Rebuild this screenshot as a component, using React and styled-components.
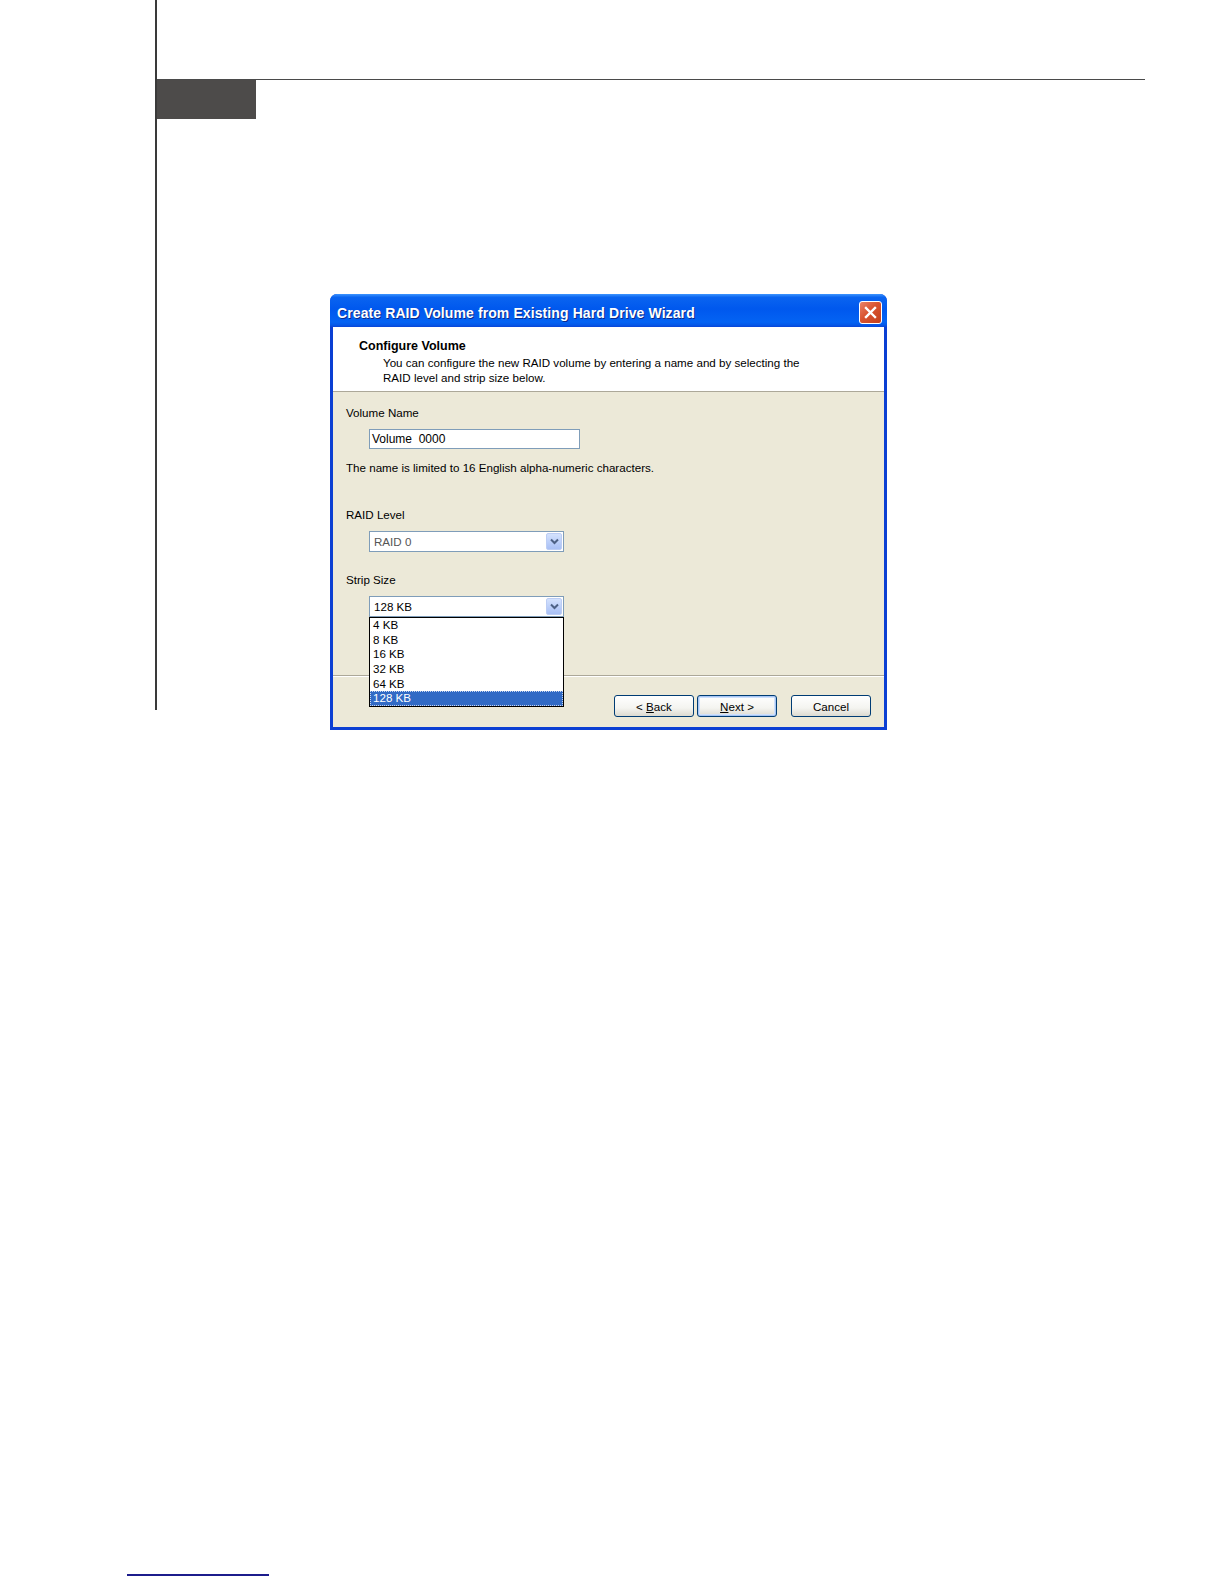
import React from "react";
import styled, { createGlobalStyle } from "styled-components";

const GlobalStyle = createGlobalStyle`
  html, body {
    margin: 0;
    padding: 0;
    background: #ffffff;
  }
  body {
    font-family: "Liberation Sans", Arial, sans-serif;
  }
`;

function Chevron() {
  return (
    <svg width="9" height="7" viewBox="0 0 9 7">
      <polyline points="1,1.5 4.5,5 8,1.5" fill="none" stroke="#4d6185" strokeWidth="2" />
    </svg>
  );
}

function CloseGlyph() {
  return (
    <svg width="13" height="13" viewBox="0 0 13 13">
      <path d="M2 2 L11 11 M11 2 L2 11" stroke="#ffffff" strokeWidth="2.4" strokeLinecap="square" />
    </svg>
  );
}

const sizes = ["4 KB", "8 KB", "16 KB", "32 KB", "64 KB", "128 KB"];

function App() {
  return (
    <Page>
      <GlobalStyle />
      <Sheet>
        <TopRule />
        <ChapterTab />
        <Dialog>
          <TitleBar>
            <TitleText>Create RAID Volume from Existing Hard Drive Wizard</TitleText>
            <CloseButton>
              <CloseGlyph />
            </CloseButton>
          </TitleBar>
          <Window>
            <Header>
              <HeaderTitle>Configure Volume</HeaderTitle>
              <HeaderText>
                You can configure the new RAID volume by entering a name and by selecting the
                <br />
                RAID level and strip size below.
              </HeaderText>
            </Header>
            <Body>
              <Label $top={0}>Volume Name</Label>
              <TextInput>Volume  0000</TextInput>
              <Label $top={12}>
                The name is limited to 16 English alpha-numeric characters.
              </Label>
              <Label $top={33}>RAID Level</Label>
              <SelectBox>
                <SelectValue $muted>RAID 0</SelectValue>
                <ArrowButton>
                  <Chevron />
                </ArrowButton>
              </SelectBox>
              <Label $top={21}>Strip Size</Label>
              <SelectBox>
                <SelectValue>128 KB</SelectValue>
                <ArrowButton>
                  <Chevron />
                </ArrowButton>
                <DropList>
                  {sizes.map((s) => (
                    <DropItem key={s} $selected={s === "128 KB"}>
                      {s}
                    </DropItem>
                  ))}
                </DropList>
              </SelectBox>
            </Body>
            <Footer>
              <Button>
                {"<\u00a0"}
                <u>B</u>ack
              </Button>
              <Button $default>
                <u>N</u>ext{"\u00a0>"}
              </Button>
              <Button $gap={14}>Cancel</Button>
            </Footer>
          </Window>
        </Dialog>
      </Sheet>
      <PageLink />
    </Page>
  );
}

const Page = styled.div`
  width: 1224px;
  height: 1584px;
  display: flex;
  flex-direction: column;
  background: #ffffff;
  overflow: hidden;
`;

const Sheet = styled.div`
  margin-left: 155px;
  width: 990px;
  height: 710px;
  padding-top: 79px;
  box-sizing: border-box;
  border-left: 2px solid #3a3a3a;
  flex-shrink: 0;
`;

const TopRule = styled.div`
  height: 0;
  border-top: 1.5px solid #4a4a4a;
`;

const ChapterTab = styled.div`
  width: 99px;
  height: 39px;
  background: #4d4b4a;
`;

const Dialog = styled.div`
  margin-left: 173px;
  margin-top: 175px;
  width: 557px;
  height: 436px;
  display: flex;
  flex-direction: column;
  border-radius: 7px 7px 0 0;
  background: #0b3fd3;
  overflow: hidden;
  position: relative;
`;

const TitleBar = styled.div`
  height: 33px;
  flex-shrink: 0;
  display: flex;
  align-items: center;
  justify-content: space-between;
  padding: 0 5px 0 7px;
  background: linear-gradient(
    to bottom,
    #3d95ff 0%,
    #0a64f0 10%,
    #0058ee 45%,
    #0463f3 85%,
    #0458e8 94%,
    #0a44d6 100%
  );
`;

const TitleText = styled.div`
  color: #ffffff;
  font-family: "Liberation Sans", Arial, sans-serif;
  font-weight: bold;
  font-size: 14px;
  letter-spacing: 0.1px;
  text-shadow: 1px 1px 0 #0c2a8a;
  margin-top: 4px;
`;

const CloseButton = styled.div`
  width: 21px;
  height: 21px;
  margin-top: 3px;
  display: flex;
  align-items: center;
  justify-content: center;
  border: 1px solid #ffffff;
  border-radius: 3px;
  background: linear-gradient(135deg, #e9846a 0%, #d9532f 45%, #c33f1c 100%);
`;

const Window = styled.div`
  flex: 1;
  display: flex;
  flex-direction: column;
  margin: 0 3px 3px;
  background: #ece9d8;
  position: relative;
`;

const Header = styled.div`
  height: 65px;
  flex-shrink: 0;
  box-sizing: border-box;
  padding: 12px 0 0 26px;
  background: #ffffff;
  border-bottom: 1px solid #aca899;
`;

const HeaderTitle = styled.div`
  font-weight: bold;
  font-size: 12.5px;
  line-height: 15px;
  color: #000000;
`;

const HeaderText = styled.div`
  margin-top: 1px;
  padding-left: 24px;
  font-size: 11.6px;
  line-height: 15px;
  color: #000000;
`;

const Body = styled.div`
  height: 283px;
  flex-shrink: 0;
  box-sizing: border-box;
  padding: 14px 0 0 13px;
  display: flex;
  flex-direction: column;
  align-items: flex-start;
  position: relative;
  z-index: 2;
`;

const Label = styled.div`
  margin-top: ${(p) => p.$top}px;
  font-size: 11.6px;
  line-height: 14px;
  color: #000000;
  white-space: nowrap;
`;

const TextInput = styled.div`
  margin: 9px 0 0 23px;
  width: 211px;
  height: 20px;
  box-sizing: border-box;
  border: 1px solid #7f9db9;
  background: #ffffff;
  padding-left: 2px;
  font-size: 12px;
  line-height: 18px;
  white-space: pre;
  color: #000000;
`;

const SelectBox = styled.div`
  margin: 9px 0 0 23px;
  width: 195px;
  height: 21px;
  box-sizing: border-box;
  border: 1px solid #7f9db9;
  background: #ffffff;
  display: flex;
  align-items: center;
  position: relative;
`;

const SelectValue = styled.div`
  flex: 1;
  padding-left: 4px;
  font-size: 11.6px;
  color: ${(p) => (p.$muted ? "#555555" : "#000000")};
`;

const ArrowButton = styled.div`
  width: 16px;
  height: 17px;
  margin-right: 1px;
  box-sizing: border-box;
  display: flex;
  align-items: center;
  justify-content: center;
  border: 1px solid #bccdf4;
  border-radius: 2px;
  background: linear-gradient(to bottom, #d4e2fd 0%, #b9cdf9 60%, #a9c0f5 100%);
`;

const DropList = styled.div`
  position: absolute;
  top: 100%;
  left: -1px;
  width: 195px;
  box-sizing: border-box;
  border: 1px solid #000000;
  background: #ffffff;
  margin-top: 1px;
  z-index: 5;
`;

const DropItem = styled.div`
  height: 14.7px;
  line-height: 14.7px;
  padding-left: 3px;
  box-sizing: border-box;
  font-size: 11.6px;
  color: ${(p) => (p.$selected ? "#ffffff" : "#000000")};
  background: ${(p) => (p.$selected ? "#316ac5" : "transparent")};
  outline: ${(p) => (p.$selected ? "1px dotted #c9d6ee" : "none")};
  outline-offset: -1px;
`;

const Footer = styled.div`
  flex: 1;
  display: flex;
  justify-content: flex-end;
  align-items: flex-start;
  padding: 19px 13px 0 0;
  border-top: 1px solid #aca899;
  box-shadow: inset 0 1px 0 #ffffff;
`;

const Button = styled.div`
  margin-left: ${(p) => (p.$gap ? p.$gap : 3)}px;
  width: 80px;
  height: 22px;
  box-sizing: border-box;
  display: flex;
  align-items: center;
  justify-content: center;
  border: 1px solid #003c74;
  border-radius: 3px;
  background: linear-gradient(to bottom, #ffffff 0%, #f4f4f0 60%, #dcdad0 100%);
  box-shadow: ${(p) =>
    p.$default ? "inset 0 0 0 1px #a6c6f5, inset 0 0 0 2px #cfe0fb" : "none"};
  font-size: 11.6px;
  color: #000000;
`;

const PageLink = styled.div`
  margin: 864px 0 0 127px;
  width: 142px;
  height: 0;
  border-top: 2px solid #1c1c8c;
`;

export default App;
